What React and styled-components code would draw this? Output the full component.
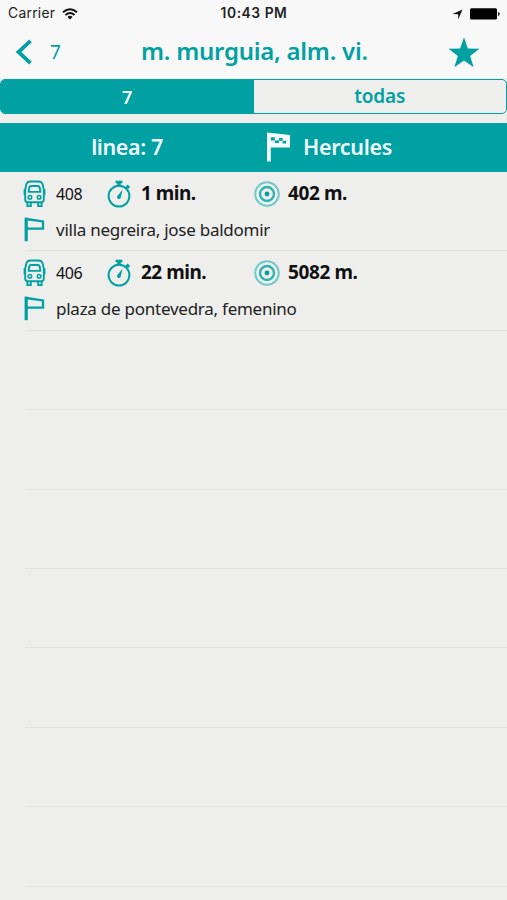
import React from "react"
import styled, { createGlobalStyle } from "styled-components"

const teal = "#00a0a3"

const GlobalStyle = createGlobalStyle`
  * { box-sizing: border-box; }
  body {
    margin: 0;
    background: #eeeeec;
    font-family: "Noto Sans", sans-serif;
    color: #222;
  }
`

const Screen = styled.div`
  width: 507px;
  height: 900px;
  overflow: hidden;
  display: flex;
  flex-direction: column;
  background: #eeeeec;
`

const Label = styled.span`
  font-size: ${p => p.$size}px;
  font-weight: ${p => p.$weight || 400};
  letter-spacing: ${p => p.$spacing || 0}px;
  line-height: 1;
  white-space: nowrap;
`

const TopArea = styled.header`
  height: 78px;
  flex: none;
  background: #f8f8f8;
`

const StatusBar = styled.div`
  height: 28px;
  padding: 0 7px 0 8px;
  display: grid;
  grid-template-columns: 1fr auto 1fr;
  align-items: center;
  font-family: Inter, sans-serif;
  color: #222;
`

const StatusSide = styled.div`
  display: flex;
  align-items: center;
  justify-content: ${p => (p.$end ? "flex-end" : "flex-start")};
  gap: 7px;
`

const NavBar = styled.nav`
  height: 48px;
  padding: 0 27px 0 15px;
  display: grid;
  grid-template-columns: 126px 1fr 32px;
  align-items: center;
  color: ${teal};
`

const Title = styled(Label)`
  padding-bottom: 2px;
`

const BackButton = styled.div`
  display: flex;
  align-items: center;
  gap: 17px;
`

const Segments = styled.div`
  height: 35px;
  flex: none;
  margin-top: 1px;
  display: flex;
  border: 1.5px solid ${teal};
  border-radius: 5px;
  overflow: hidden;
`

const Segment = styled.div`
  flex: 1;
  display: flex;
  align-items: center;
  justify-content: center;
  background: ${p => (p.$active ? teal : "transparent")};
  color: ${p => (p.$active ? "#f4fbfb" : teal)};
`

const Banner = styled.div`
  height: 49px;
  flex: none;
  margin-top: 9px;
  display: grid;
  grid-template-columns: 254px 1fr;
  align-items: center;
  background: ${teal};
  color: #effafa;
`

const BannerLine = styled.div`
  text-align: center;
`

const BannerRoute = styled.div`
  display: flex;
  align-items: center;
  padding: 0 0 2px 12px;
  gap: 12px;
`

const List = styled.div`
  flex: none;
`

const Row = styled.div`
  height: 79.4px;
  margin-left: 25px;
  border-bottom: 1px solid #e1e1df;
`

const Details = styled.div`
  height: 43px;
  margin-left: -2px;
  display: grid;
  grid-template-columns: 33px 51px 34px 113px 34px 1fr;
  align-items: center;
  color: #111;
`

const StopLine = styled.div`
  height: 29px;
  margin-left: -2px;
  display: grid;
  grid-template-columns: 33px 1fr;
  align-items: center;
`

const Icon = styled.svg`
  display: block;
  fill: none;
  stroke: ${teal};
`

function BusIcon() {
  return (
    <Icon width="24" height="28" viewBox="0 0 24 28" strokeWidth="1.9">
      <path
        d="M7.5 1.5h8q3.6 0 4.3 3.5l1 4.8v9.7q0 2.8-2.6 2.8H4.8q-2.6 0-2.6-2.8V9.8l1-4.8q.7-3.5 4.3-3.5z"
        strokeLinejoin="round"
      />
      <path d="M1.3 9.2v6M21.7 9.2v6" strokeWidth="1.4" />
      <path d="M8.3 6h6.4q1.7 0 2 1.5l.7 4.4H5.6l.7-4.4q.3-1.5 2-1.5z" strokeLinejoin="round" />
      <circle cx="6.9" cy="17.3" r="1.8" strokeWidth="1.5" />
      <circle cx="16.1" cy="17.3" r="1.8" strokeWidth="1.5" />
      <path d="M4.4 22.5v3.6h3.4v-3.6M15.2 22.5v3.6h3.4v-3.6" />
    </Icon>
  )
}

function StopwatchIcon() {
  return (
    <Icon width="25" height="28" viewBox="0 0 25 28" strokeWidth="2">
      <circle cx="12" cy="16.1" r="10.4" />
      <path d="M8.6 2h6.8" strokeWidth="2.6" />
      <path d="M12 2.5v3.5" strokeWidth="3.6" />
      <path d="M18.4 8.6l2.4-2.4" />
      <path d="M19.6 5.4l2.6 2.6" strokeWidth="2.8" />
      <path d="M15.6 9.8l-1.8 7.4a1.9 1.9 0 1 1-3-1.7z" fill={teal} stroke="none" />
    </Icon>
  )
}

function TargetIcon() {
  return (
    <Icon width="26" height="26" viewBox="0 0 26 26">
      <circle cx="13" cy="13" r="11.7" stroke="#78c8c7" strokeWidth="2.2" />
      <circle cx="13" cy="13" r="9.4" stroke="#e5f8f7" strokeWidth="2.2" />
      <circle cx="13" cy="13" r="7" stroke="#35b0ae" strokeWidth="2.4" />
      <circle cx="13" cy="13" r="2.4" fill={teal} stroke="none" />
    </Icon>
  )
}

function FlagIcon() {
  return (
    <Icon width="22" height="25" viewBox="0 0 22 25" strokeWidth="2.3">
      <path d="M3.2 .6v23.6" strokeWidth="3.2" />
      <path d="M3 2L20 4.4v7.2H4" />
    </Icon>
  )
}

function GoalFlagIcon() {
  return (
    <Icon width="25" height="30" viewBox="0 0 25 30">
      <path d="M1 .5L24 3v12.5H4.8V29.5H1z" fill="#f4fcfc" stroke="none" />
      <path
        d="M5 5.2h3.8v3.2H5zM13 6h3.6v2.8H13zM8.8 8.4h4.2v2.6H8.8zM16.6 8.8h3.6v2.6h-3.6z"
        fill={teal}
        stroke="none"
      />
    </Icon>
  )
}

function WifiIcon() {
  return (
    <svg width="16" height="12" viewBox="0 0 16 12" fill="none" stroke="#111" strokeWidth="1.9">
      <path d="M1 4.3Q8-2 15 4.3M3.5 7Q8 3.1 12.5 7" />
      <path d="M5.5 8.9Q8 6.8 10.5 8.9L8 11.6z" fill="#111" stroke="none" />
    </svg>
  )
}

function BatteryIcon() {
  return (
    <svg width="30" height="12" viewBox="0 0 30 12">
      <rect x="0" y="0.2" width="27" height="11.3" rx="1.5" fill="#000" />
      <path d="M28 4q1.8 0.4 1.8 2T28 8z" fill="#222" />
    </svg>
  )
}

const buses = [
  { id: "408", time: "1 min.", distance: "402 m.", stop: "villa negreira, jose baldomir" },
  { id: "406", time: "22 min.", distance: "5082 m.", stop: "plaza de pontevedra, femenino" },
]

const emptyRows = [0, 1, 2, 3, 4, 5, 6]

export default function App() {
  return (
    <Screen>
      <GlobalStyle />
      <TopArea>
        <StatusBar>
          <StatusSide>
            <Label $size={13.8} $spacing={0.3}>Carrier</Label>
            <WifiIcon />
          </StatusSide>
          <Label $size={13.8} $weight={600} $spacing={0.55}>10:43 PM</Label>
          <StatusSide $end>
            <svg width="11" height="11" viewBox="0 0 11 11">
              <path d="M10.5.5L6.2 10.5V5.2L.5 5z" fill="#111" />
            </svg>
            <BatteryIcon />
          </StatusSide>
        </StatusBar>
        <NavBar>
          <BackButton>
            <svg width="18" height="26" viewBox="0 0 18 26" fill="none" stroke={teal} strokeWidth="3.8">
              <path d="M15.5 1.8L3.5 13l12 11.2" />
            </svg>
            <Label $size={19}>7</Label>
          </BackButton>
          <Title $size={24} $weight={600} $spacing={-0.25}>m. murguia, alm. vi.</Title>
          <svg width="32" height="31" viewBox="0 0 32 31">
            <path d="M16 .5l3.9 11.1 11.6.2-9.3 7.1 3.4 11.3L16 23.4l-9.6 6.8 3.4-11.3L.5 11.8l11.6-.2z" fill={teal} />
          </svg>
        </NavBar>
      </TopArea>
      <Segments>
        <Segment $active><Label $size={18} $weight={600}>7</Label></Segment>
        <Segment><Label $size={19} $weight={600} $spacing={-0.2}>todas</Label></Segment>
      </Segments>
      <Banner>
        <BannerLine><Label $size={21.5} $weight={600} $spacing={-0.4}>linea: 7</Label></BannerLine>
        <BannerRoute>
          <GoalFlagIcon />
          <Label $size={21.5} $weight={600} $spacing={-0.3}>Hercules</Label>
        </BannerRoute>
      </Banner>
      <List>
        {buses.map(bus => (
          <Row key={bus.id}>
            <Details>
              <BusIcon />
              <Label $size={16} $spacing={-0.35}>{bus.id}</Label>
              <StopwatchIcon />
              <Label $size={19} $weight={700} $spacing={-0.5}>{bus.time}</Label>
              <TargetIcon />
              <Label $size={19} $weight={700} $spacing={-0.4}>{bus.distance}</Label>
            </Details>
            <StopLine>
              <FlagIcon />
              <Label $size={17} $spacing={-0.25}>{bus.stop}</Label>
            </StopLine>
          </Row>
        ))}
        {emptyRows.map(n => <Row key={n} />)}
      </List>
    </Screen>
  )
}
